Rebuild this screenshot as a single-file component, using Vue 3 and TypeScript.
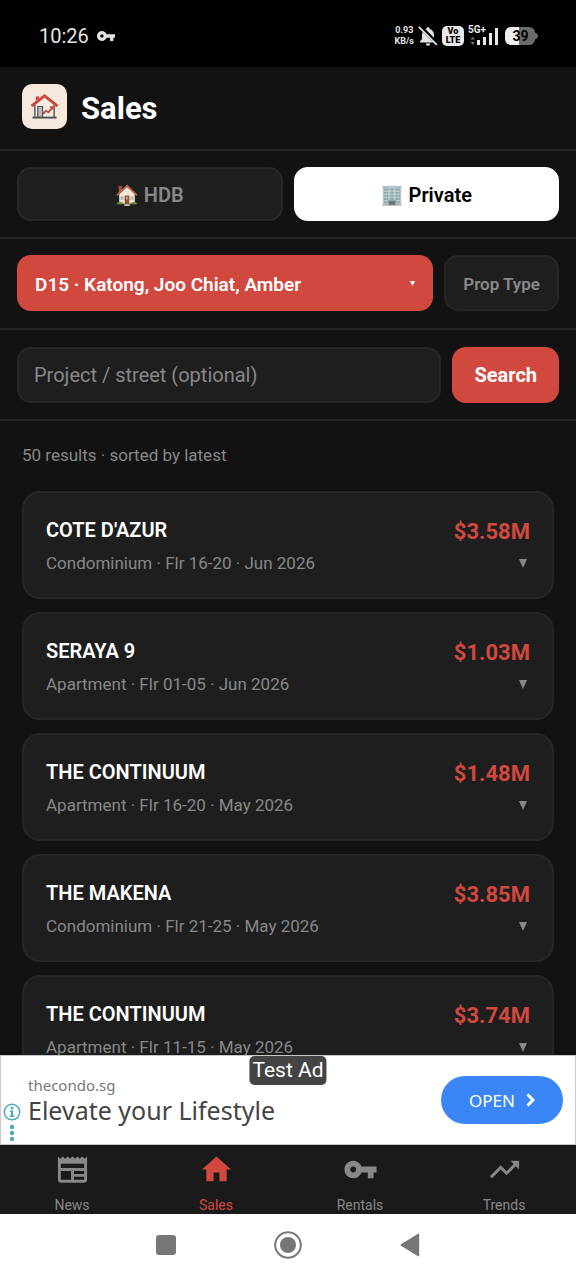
<script setup lang="ts">
import { ref } from 'vue'

interface Sale {
  name: string
  kind: string
  floor: string
  month: string
  price: string
}

const sales: Sale[] = [
  { name: "COTE D'AZUR", kind: 'Condominium', floor: '16-20', month: 'Jun 2026', price: '$3.58M' },
  { name: 'SERAYA 9', kind: 'Apartment', floor: '01-05', month: 'Jun 2026', price: '$1.03M' },
  { name: 'THE CONTINUUM', kind: 'Apartment', floor: '16-20', month: 'May 2026', price: '$1.48M' },
  { name: 'THE MAKENA', kind: 'Condominium', floor: '21-25', month: 'May 2026', price: '$3.85M' },
  { name: 'THE CONTINUUM', kind: 'Apartment', floor: '11-15', month: 'May 2026', price: '$3.74M' },
]

const tabs = [
  { label: 'News', icon: 'M22 3l-1.67 1.67L18.67 3 17 4.67 15.33 3l-1.66 1.67L12 3l-1.67 1.67L8.67 3 7 4.67 5.33 3 3.67 4.67 2 3v16c0 1.1.9 2 2 2h16c1.1 0 2-.9 2-2V3zM11 19H4v-6h7v6zm9 0h-7v-2h7v2zm0-4h-7v-2h7v2zm0-4H4V8h16v3z' },
  { label: 'Sales', icon: 'M10 20v-6h4v6h5v-8h3L12 3 2 12h3v8z' },
  { label: 'Rentals', icon: 'M12.65 10C11.83 7.67 9.61 6 7 6c-3.31 0-6 2.69-6 6s2.69 6 6 6c2.61 0 4.83-1.67 5.65-4H17v4h4v-4h2v-4H12.65zM7 14c-1.1 0-2-.9-2-2s.9-2 2-2 2 .9 2 2-.9 2-2 2z' },
  { label: 'Trends', icon: 'M16 6l2.29 2.29-4.88 4.88-4-4L2 16.59 3.41 18l6-6 4 4 6.3-6.29L22 12V6z' },
]

const market = ref<'hdb' | 'private'>('private')
const district = ref('D15')
const query = ref('')
const activeTab = ref('Sales')
</script>

<template>
  <div class="screen">
    <div class="status">
      <div class="status-left">
        <span class="clock">10:26</span>
        <svg class="vpn" viewBox="1 6 22 12" aria-hidden="true"><path :d="tabs[2].icon" /></svg>
      </div>
      <div class="status-right">
        <span class="speed">0.93<br>KB/s</span>
        <svg class="bell" viewBox="0 0 20 20" aria-hidden="true">
          <path d="M10 1a1.6 1.6 0 0 0-1.6 1.6v.5C5.600 3.800 4 6.200 4 9v4.200L2 15.300V16.500H18V15.300L16 13.200V9c0-2.800-1.600-5.200-4.400-5.900v-.5A1.600 1.600 0 0 0 10 1zM7.800 17.600a2.200 2.200 0 0 0 4.400 0z" />
          <path d="M1.500 0L20 18.500" stroke="#000" stroke-width="4" />
          <path d="M.8.800L18.800 18.800" stroke="#e4e4e4" stroke-width="1.800" />
        </svg>
        <span class="volte"><span>Vo</span><span>LTE</span></span>
        <svg class="signal" viewBox="0 0 32 22" aria-hidden="true">
          <text x="0" y="8">5G+</text>
          <path d="M2.500 14.500l2.200-2.800 2.200 2.800zM2.500 17l2.200 2.800L6.900 17z" fill="#777" />
          <path d="M9 15h3v5H9zM15 12h3v8h-3zM21 8h3v12h-3zM27 3h3v17h-3z" />
        </svg>
        <svg class="battery" viewBox="0 0 34 18" role="img" aria-label="39%">
          <path d="M6 0H14V18H6a6 6 0 0 1-6-6V6a6 6 0 0 1 6-6z" fill="#eee" />
          <path d="M14 0H24a6 6 0 0 1 6 5.500c2 .7 3 2 3 3.500s-1 2.800-3 3.500a6 6 0 0 1-6 5.500H14z" fill="#6c6c6c" />
          <text x="15.500" y="14" text-anchor="middle">39</text>
        </svg>
      </div>
    </div>

    <header class="header">
      <span class="logo">
        <svg viewBox="0 0 30 28" aria-hidden="true">
          <path d="M5 11.500L15 4l10 7.500V25H5z" fill="#f8ede2" />
          <path d="M5 12v13M25 12v13" stroke="#686260" stroke-width="1.600" />
          <path d="M2.500 25.500H27.500" stroke="#555152" stroke-width="2" />
          <path d="M8 25V14h5v11z" fill="#b8bbc0" stroke="#555152" stroke-width="1.200" />
          <path d="M6 8V3.500h3.500V6" fill="#c94940" />
          <path d="M1.500 13.500L15 3l13.500 10.500" fill="none" stroke="#c94940" stroke-width="3" />
          <path d="M13.500 21.500l3-3 2.500 1.500 4-4.500" fill="none" stroke="#c94940" stroke-width="1.900" />
          <path d="M19.800 14.200l4.700-1-.4 4.800z" fill="#c94940" />
        </svg>
      </span>
      <h1>Sales</h1>
    </header>

    <div class="bar">
      <button class="segment" :class="{ on: market === 'hdb' }" type="button" @click="market = 'hdb'">
        <svg class="emoji" viewBox="0 0 24 24" aria-hidden="true">
          <path d="M3 3h3.500v7H3z" fill="#a9553a" />
          <path d="M2.500 2h4.500v1.500H2.500z" fill="#855044" />
          <path d="M3.500 11L12 3l8.500 8v10.500h-17z" fill="#f3e8d8" />
          <path d="M3.500 14h17M3.500 17h17" stroke="#cdbda9" stroke-width=".6" />
          <path d="M1 12.500L12 2l11 10.500" fill="none" stroke="#bd6549" stroke-width="2" />
          <path d="M9.500 12.500h5V22h-5z" fill="#8f5541" />
          <path d="M11 14h2v3h-2z" fill="#ce9a77" />
          <path d="M5 14h3v3H5zM16 14h3v3h-3z" fill="#a5b6b9" />
          <path d="M1 22c0-2 2-3 4-2.500S8.500 20.500 9 22zM15 22c.5-1.500 2-2.500 4-2.500s4 .5 4 2.500z" fill="#6e963e" />
          <path d="M9 22h6v2H9z" fill="#c9bdb4" />
        </svg>
        <span>HDB</span>
      </button>
      <button class="segment" :class="{ on: market === 'private' }" type="button" @click="market = 'private'">
        <svg class="emoji" viewBox="0 0 24 24" aria-hidden="true">
          <path d="M2 3h7V2h6v1h7v20H2z" fill="#b4c6c8" />
          <path d="M1.500 3h7.800M14.700 3h7.800" stroke="#8fa2a6" stroke-width="1" />
          <path d="M3.500 6h17M3.500 9.500h17M3.500 13h17M3.500 16.500h17M3.500 20h17" stroke="#7f9da2" stroke-width="1.700" stroke-dasharray="1.800 .8" />
          <path d="M9 4v14M15 4v14" stroke="#d4dfdf" stroke-width=".8" />
          <path d="M8 17.500h8V23H8z" fill="#8f9d9f" />
          <path d="M9 19h6v4H9z" fill="#5c6669" />
          <path d="M12 19v4" stroke="#b8c4c4" stroke-width=".6" />
          <path d="M1.500 23h21" stroke="#8f9b9f" stroke-width="1" />
        </svg>
        <span>Private</span>
      </button>
    </div>

    <div class="bar filters">
      <div class="district">
        <select v-model="district" aria-label="District">
          <option value="D15">D15 · Katong, Joo Chiat, Amber</option>
        </select>
        <svg viewBox="0 0 6 6" aria-hidden="true"><path d="M0 0h6L3 6z" /></svg>
      </div>
      <button class="prop-type" type="button">Prop Type</button>
    </div>

    <form class="bar lookup" @submit.prevent>
      <input v-model="query" class="query" type="text" placeholder="Project / street (optional)" aria-label="Project or street">
      <button class="search" type="submit">Search</button>
    </form>

    <main class="results">
      <p class="summary">50 results · sorted by latest</p>
      <ul>
        <li v-for="(sale, i) in sales" :key="i">
          <button class="card" type="button">
            <span class="row top">
              <span class="name">{{ sale.name }}</span>
              <span class="price">{{ sale.price }}</span>
            </span>
            <span class="row">
              <span class="detail">{{ sale.kind }} · Flr {{ sale.floor }} · {{ sale.month }}</span>
              <svg class="more" viewBox="0 0 8 9" aria-hidden="true"><path d="M0 0h8L4 9z" /></svg>
            </span>
          </button>
        </li>
      </ul>
    </main>

    <aside class="ad">
      <span class="ad-badge">Test Ad</span>
      <div class="ad-marks">
        <svg viewBox="0 0 18 40" aria-hidden="true">
          <circle cx="9" cy="9" r="7.800" fill="none" stroke="#4aa9bd" stroke-width="1.500" />
          <circle cx="9" cy="5" r="1.500" />
          <path d="M6.800 7.500h3.400v5h1.200V14H6.800v-1.500H8V9H6.800z" />
          <circle cx="9" cy="24" r="2.200" />
          <circle cx="9" cy="30" r="2.200" />
          <circle cx="9" cy="36" r="2.200" />
        </svg>
      </div>
      <div class="ad-text">
        <span class="ad-site">thecondo.sg</span>
        <span class="ad-title">Elevate your Lifestyle</span>
      </div>
      <button class="ad-open" type="button">
        <span>OPEN</span>
        <svg viewBox="0 0 9 14" aria-hidden="true"><path d="M1.500 1.500L7 7l-5.500 5.500" /></svg>
      </button>
    </aside>

    <nav class="tabs">
      <a v-for="tab in tabs" :key="tab.label" href="#" :class="{ active: activeTab === tab.label }" @click.prevent="activeTab = tab.label">
        <svg viewBox="0 0 24 24" aria-hidden="true"><path :d="tab.icon" /></svg>
        <span>{{ tab.label }}</span>
      </a>
    </nav>

    <div class="system">
      <button type="button" aria-label="Recent apps">
        <svg viewBox="0 0 28 28"><rect x="4" y="4" width="20" height="20" rx="3" /></svg>
      </button>
      <button type="button" aria-label="Home">
        <svg viewBox="0 0 28 28"><circle cx="14" cy="14" r="12.800" fill="none" stroke="#777" stroke-width="2" /><circle cx="14" cy="14" r="8" /></svg>
      </button>
      <button type="button" aria-label="Back">
        <svg viewBox="0 0 28 28"><path d="M5 13.200L22 2.700c.6-.4 1.200 0 1.200.7v21.200c0 .7-.6 1.100-1.200.7L5 14.800c-.7-.4-.7-1.200 0-1.600z" /></svg>
      </button>
    </div>
  </div>
</template>

<style>
body {
  background: #121212;
}
</style>

<style scoped>
.screen {
  display: flex;
  flex-direction: column;
  height: 100vh;
  background: #121212;
  color: #fff;
  font-family: Roboto, "Liberation Sans", sans-serif;
}
.screen * {
  box-sizing: border-box;
}
button,
input,
select {
  margin: 0;
  font-family: inherit;
}
svg {
  display: block;
  flex: none;
}
.status {
  display: flex;
  justify-content: space-between;
  align-items: center;
  flex: none;
  height: 67px;
  padding: 4px 37px 0 39px;
  background: #000;
}
.status-left {
  display: flex;
  align-items: center;
  gap: 8px;
}
.clock {
  font-size: 20px;
  line-height: 24px;
  color: #e4e4e4;
}
.vpn {
  width: 18px;
  height: 10px;
  fill: #e4e4e4;
}
.status-right {
  display: flex;
  align-items: center;
  gap: 4px;
  color: #e4e4e4;
}
.speed {
  font-size: 9px;
  line-height: 11px;
  font-weight: 700;
  text-align: center;
}
.bell {
  width: 20px;
  height: 20px;
  fill: #e4e4e4;
}
.volte {
  display: flex;
  flex-direction: column;
  align-items: center;
  justify-content: center;
  width: 22px;
  height: 20px;
  border-radius: 5px;
  background: #e8e8e8;
  color: #000;
  font-size: 9px;
  line-height: 9px;
  font-weight: 900;
}
.signal {
  width: 32px;
  height: 22px;
  fill: #e8e8e8;
  font-size: 10px;
  font-weight: 700;
}
.battery {
  width: 34px;
  height: 18px;
  margin-left: 1px;
  font-size: 14px;
  font-weight: 700;
}
.header {
  display: flex;
  align-items: center;
  gap: 14px;
  flex: none;
  padding: 17px 22px 20px;
  border-bottom: 2px solid #242424;
}
.logo {
  display: grid;
  place-items: center;
  width: 45px;
  height: 45px;
  border-radius: 10px;
  background: #f6e8dc;
}
.logo svg {
  width: 29px;
  height: 27px;
}
h1 {
  margin: 0;
  padding-top: 4px;
  font-size: 31px;
  line-height: 36px;
  font-weight: 700;
}
.bar {
  display: flex;
  gap: 11px;
  flex: none;
  padding: 16px 17px;
  border-bottom: 2px solid #242424;
}
.bar.filters {
  padding-bottom: 17px;
}
.bar.lookup {
  padding-top: 17px;
}
.segment {
  display: flex;
  flex: 1;
  align-items: center;
  justify-content: center;
  gap: 6px;
  height: 54px;
  padding: 2px 6px 0;
  border: 2px solid #282828;
  border-radius: 14px;
  background: #1e1e1e;
  color: #888;
  font-size: 20px;
  font-weight: 600;
}
.segment.on {
  border-color: #fff;
  background: #fff;
  color: #000;
}
.emoji {
  width: 22px;
  height: 22px;
}
.district {
  display: flex;
  flex: 1;
  position: relative;
}
.district select {
  flex: 1;
  min-width: 0;
  height: 56px;
  padding: 2px 40px 0 18px;
  border: 0;
  border-radius: 14px;
  appearance: none;
  background: #d1483f;
  color: #fff;
  font-size: 19px;
  font-weight: 600;
}
.district svg {
  position: absolute;
  top: 26px;
  right: 18px;
  width: 5px;
  height: 5px;
  fill: #fff;
  pointer-events: none;
}
.prop-type {
  flex: none;
  height: 56px;
  padding: 2px 17px 0;
  border: 2px solid #262626;
  border-radius: 14px;
  background: #1e1e1e;
  color: #888;
  font-size: 17px;
  font-weight: 600;
}
.query {
  flex: 1;
  min-width: 0;
  height: 56px;
  padding: 0 15px;
  border: 2px solid #262626;
  border-radius: 14px;
  background: #1e1e1e;
  color: #fff;
  font-size: 20px;
}
.query::placeholder {
  color: #888;
  opacity: 1;
}
.search {
  flex: none;
  height: 56px;
  padding: 0 22px;
  border: 0;
  border-radius: 14px;
  background: #d1483f;
  color: #fff;
  font-size: 20px;
  font-weight: 700;
}
.results {
  flex: 1;
  min-height: 0;
  overflow: hidden;
  padding: 23px 22px 0;
}
.summary {
  margin: 0 0 25px;
  color: #888;
  font-size: 17px;
  line-height: 22px;
}
ul {
  display: flex;
  flex-direction: column;
  gap: 13px;
  margin: 0;
  padding: 0;
  list-style: none;
}
.card {
  display: flex;
  flex-direction: column;
  gap: 5px;
  width: 100%;
  height: 108px;
  padding: 24px 22px;
  border: 2px solid #262626;
  border-radius: 18px;
  background: #1e1e1e;
  text-align: left;
}
.row {
  display: flex;
  justify-content: space-between;
  align-items: center;
  width: 100%;
}
.row.top {
  align-items: flex-start;
}
.name {
  color: #fff;
  font-size: 20px;
  line-height: 27px;
  font-weight: 600;
}
.price {
  color: #d1483f;
  font-size: 22px;
  line-height: 30px;
  font-weight: 700;
}
.detail {
  color: #888;
  font-size: 17px;
  line-height: 22px;
}
.more {
  width: 8px;
  height: 9px;
  margin-right: 3px;
  fill: #888;
}
.ad {
  display: flex;
  align-items: center;
  position: relative;
  flex: none;
  height: 90px;
  padding: 0 12px 0 2px;
  border: 1px solid #c8c8c8;
  background: #fff;
  font-family: "Noto Sans", "Open Sans", sans-serif;
}
.ad-badge {
  position: absolute;
  top: 0;
  left: 50%;
  transform: translateX(-50%);
  padding: 2px 3px;
  border-radius: 5px;
  background: #444;
  color: #fff;
  font-family: Roboto, "Liberation Sans", sans-serif;
  font-size: 21px;
  line-height: 25px;
  white-space: nowrap;
}
.ad-marks {
  align-self: flex-end;
  padding-bottom: 1px;
}
.ad-marks svg {
  width: 18px;
  height: 40px;
  fill: #4aa9bd;
}
.ad-text {
  display: flex;
  flex: 1;
  flex-direction: column;
  padding-left: 7px;
}
.ad-site {
  color: #777;
  font-size: 15px;
  line-height: 20px;
}
.ad-title {
  color: #444;
  font-size: 25px;
  line-height: 30px;
}
.ad-open {
  display: flex;
  align-items: center;
  justify-content: center;
  gap: 11px;
  width: 122px;
  height: 48px;
  padding: 0;
  border: 0;
  border-radius: 24px;
  background: #3b86f6;
  color: #fff;
  font-family: inherit;
  font-size: 17px;
}
.ad-open svg {
  width: 9px;
  height: 14px;
  fill: none;
  stroke: #fff;
  stroke-width: 3;
}
.tabs {
  display: flex;
  flex: none;
  height: 69px;
  padding-top: 7px;
  background: #1a1a1a;
}
.tabs a {
  display: flex;
  flex: 1;
  flex-direction: column;
  align-items: center;
  gap: 9px;
  color: #888;
  font-size: 14px;
  line-height: 18px;
  text-decoration: none;
}
.tabs a.active {
  color: #d1483f;
}
.tabs svg {
  width: 35px;
  height: 35px;
  fill: currentColor;
}
.system {
  display: flex;
  align-items: center;
  justify-content: center;
  gap: 94px;
  flex: none;
  height: 66px;
  padding-bottom: 4px;
  background: #fff;
}
.system button {
  padding: 0;
  border: 0;
  background: none;
}
.system svg {
  width: 28px;
  height: 28px;
  fill: #777;
}
</style>
